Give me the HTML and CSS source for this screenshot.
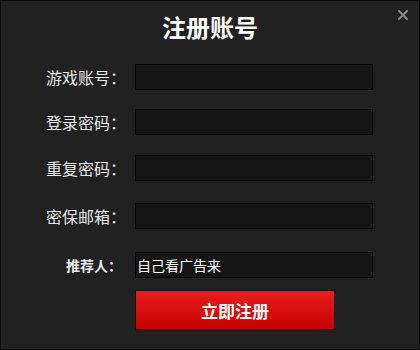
FILE: index.html
```html
<!DOCTYPE html>
<html lang="zh-CN">
<head>
    <meta charset="UTF-8">
    <meta name="viewport" content="width=device-width, initial-scale=1.0">
    <title>注册账号</title>
    <link rel="stylesheet" href="styles.css">
</head>
<body>
    <div id="dialog">
        <a class="close" href="#" title="关闭">
            <svg width="10" height="10" viewBox="0 0 10 10">
                <path d="M1 1 L9 9 M9 1 L1 9" stroke="#8a8a8a" stroke-width="2" stroke-linecap="square"/>
            </svg>
        </a>
        <h1>注册账号</h1>

        <form class="reg-form">
            <div class="row">
                <label for="account">游戏账号：</label>
                <input type="text" id="account">
            </div>
            <div class="row">
                <label for="password">登录密码：</label>
                <input type="password" id="password">
            </div>
            <div class="row">
                <label for="password2">重复密码：</label>
                <input type="password" id="password2">
            </div>
            <div class="row row-mail">
                <label for="email">密保邮箱：</label>
                <input type="text" id="email">
            </div>
            <div class="row row-ref">
                <label for="referrer">推荐人：</label>
                <input type="text" id="referrer" value="自己看广告来">
            </div>
            <div class="row row-btn">
                <button type="button" id="submitBtn">立即注册</button>
            </div>
        </form>
    </div>
</body>
</html>
```

FILE: styles.css
```css
body {
    margin: 0;
    padding: 0;
    background-color: #212121;
    font-family: "Noto Sans CJK SC", "Noto Sans", sans-serif;
}

#dialog {
    position: relative;
    box-sizing: border-box;
    width: 420px;
    height: 350px;
    border: 1px solid #0c0c0c;
    background-color: #212121;
}

h1 {
    margin: 0;
    padding-top: 14px;
    font-size: 24px;
    line-height: 24px;
    font-weight: bold;
    color: #fff;
    text-align: center;
}

.close {
    position: absolute;
    top: 9px;
    right: 11px;
    display: block;
    width: 10px;
    height: 10px;
    line-height: 0;
}

.reg-form {
    margin-top: 25px;
}

.row {
    display: flex;
    align-items: center;
    height: 26px;
    margin-bottom: 19px;
}

.row label {
    box-sizing: border-box;
    flex: none;
    width: 125px;
    margin-right: 9px;
    text-align: right;
    font-size: 16px;
    line-height: 26px;
    color: #e8e8e8;
}

.row input {
    box-sizing: border-box;
    width: 238px;
    height: 26px;
    padding: 0 1px;
    border: 1px solid #000;
    background-color: #161616;
    color: #fff;
    font-family: inherit;
    font-size: 14px;
    outline: none;
}

.row:nth-child(2) {
    margin-bottom: 20px;
}

.row:nth-child(3) {
    margin-bottom: 22px;
}

.row-mail {
    margin-bottom: 23px;
}

.row-ref {
    margin-bottom: 12px;
}

.row-ref label {
    padding-right: 4px;
    font-size: 14px;
    font-weight: bold;
}

.row-btn {
    height: 40px;
    padding-left: 134px;
}

#submitBtn {
    box-sizing: border-box;
    width: 200px;
    height: 40px;
    border: 1px solid #111;
    background: linear-gradient(to bottom, #e91f1f, #c60000);
    color: #fff;
    font-family: inherit;
    font-size: 17px;
    font-weight: bold;
    cursor: pointer;
}

#submitBtn:hover {
    background: linear-gradient(to bottom, #f22a2a, #d40000);
}
```
